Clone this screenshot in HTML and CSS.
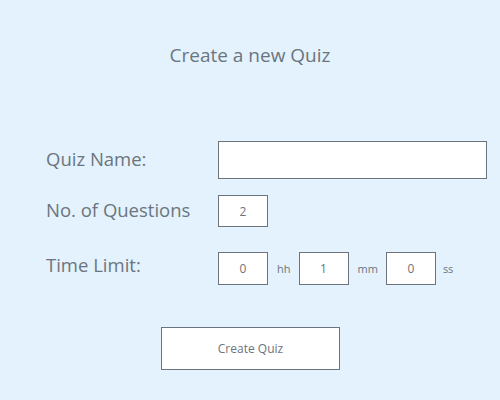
FILE: index.html
```html
<!DOCTYPE html>
<html>
<head>
<meta charset="utf-8">
<link rel="stylesheet" href="styles.css">
</head>
<body>
<div class="page">
  <h1 class="title">Create a new Quiz</h1>
  <div class="form">
    <div class="row row-name">
      <label class="label">Quiz Name:</label>
      <input class="input input-wide" type="text" value="">
    </div>
    <div class="row row-count">
      <label class="label">No. of Questions</label>
      <input class="input input-small" type="text" value="2">
    </div>
    <div class="row row-time">
      <label class="label">Time Limit:</label>
      <div class="time">
        <input class="input input-small" type="text" value="0">
        <span class="unit unit-hh">hh</span>
        <input class="input input-small" type="text" value="1">
        <span class="unit unit-mm">mm</span>
        <input class="input input-small" type="text" value="0">
        <span class="unit unit-ss">ss</span>
      </div>
    </div>
  </div>
  <div class="actions">
    <button class="btn">Create Quiz</button>
  </div>
</div>
</body>
</html>
```
FILE: styles.css
```css
html, body {
  margin: 0;
  padding: 0;
}
body {
  background: #e3f2fd;
  font-family: "Open Sans", "Segoe UI", sans-serif;
  color: #6c757d;
}
.page {
  width: 500px;
  height: 400px;
  box-sizing: border-box;
  padding-top: 42px;
}
.title {
  margin: 0;
  font-size: 19px;
  font-weight: 400;
  text-align: center;
  line-height: 26px;
  color: #6c757d;
}
.form {
  margin-top: 73px;
  padding-left: 46px;
  display: flex;
  flex-direction: column;
  gap: 16px;
}
.row {
  display: flex;
  align-items: center;
}
.label {
  width: 172px;
  font-size: 18.5px;
  line-height: 24px;
  margin-top: -3px;
  color: #6c757d;
}
.row-time .label {
  margin-top: -7px;
}
.input {
  box-sizing: border-box;
  background: #fff;
  border: 1px solid #6c757d;
  border-radius: 0;
  font-family: "Open Sans", sans-serif;
  font-size: 12px;
  color: #6c757d;
  text-align: center;
  padding: 0;
  outline: none;
}
.input-wide {
  width: 269px;
  height: 38px;
}
.input-small {
  width: 50px;
  height: 32px;
}
.row-time .input-small {
  height: 33px;
}
.time {
  display: flex;
  align-items: center;
}
.unit {
  font-size: 11px;
  color: #6c757d;
}
.unit-hh { margin: 0 8px 0 9px; }
.unit-mm { margin: 0 8px 0 9px; }
.unit-ss { margin-left: 7px; }
.row-time {
  margin-top: 9px;
}
.actions {
  display: flex;
  justify-content: center;
  margin-top: 42px;
}
.btn {
  width: 179px;
  height: 43px;
  background: #fff;
  border: 1px solid #6c757d;
  border-radius: 0;
  font-family: "Open Sans", sans-serif;
  font-size: 12px;
  color: #6c757d;
  margin-left: 1px;
}
```
